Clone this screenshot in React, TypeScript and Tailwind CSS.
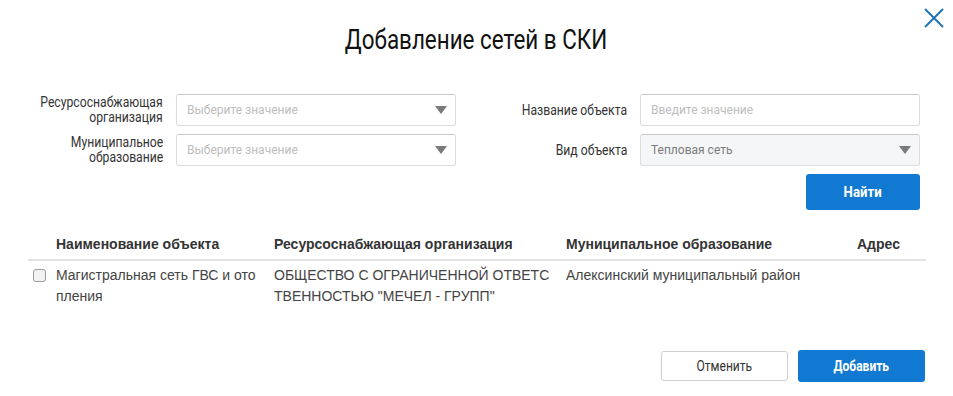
function Arrow() {
  return (
    <svg width="12" height="8" viewBox="0 0 12 8" className="shrink-0">
      <path d="M0 0 L12 0 L6 8 Z" fill="#7a7a7a" />
    </svg>
  );
}

function Select({ text, muted = false, disabled = false }: { text: string; muted?: boolean; disabled?: boolean }) {
  return (
    <div
      className={`flex items-center justify-between w-[280px] h-[32px] pl-[10px] pr-[8px] rounded-[3px] border border-[#dcdcdc] border-t-[#c8c8c8] ${
        disabled ? "bg-[#f5f6f8]" : "bg-white"
      }`}
    >
      <span className={`text-[12px] font-['Roboto'] ${muted ? "text-[#bdbdbd]" : "text-[#7b7b7b]"}`}>{text}</span>
      <Arrow />
    </div>
  );
}

function Field({ label, children, lw }: { label: React.ReactNode; children: React.ReactNode; lw: string }) {
  return (
    <div className="flex items-center">
      <div className={`${lw} flex justify-end pr-[13px]`}>
        <span className="block text-right origin-right scale-x-[0.87] font-['Roboto'] text-[14px] leading-[15px] text-[#333]">
          {label}
        </span>
      </div>
      {children}
    </div>
  );
}

function App() {
  return (
    <div className="w-[953px] h-[396px] bg-white relative font-['Liberation_Sans',Arial,sans-serif]">
      <button className="absolute right-[8px] top-[7px] w-[22px] h-[22px]">
        <svg width="22" height="22" viewBox="0 0 22 22">
          <path d="M2 2 L20 20 M20 2 L2 20" stroke="#1f74b8" strokeWidth="2" />
        </svg>
      </button>

      <div className="pt-[24px] text-center">
        <span className="inline-block scale-x-[0.83] font-['Roboto'] text-[27px] leading-[32px] text-[#111]">
          Добавление сетей в СКИ
        </span>
      </div>

      <div className="flex pt-[38px]">
        <div className="flex flex-col gap-[8px]">
          <Field lw="w-[176px]" label={<>Ресурсоснабжающая<br />организация</>}>
            <Select text="Выберите значение" muted />
          </Field>
          <Field lw="w-[176px]" label={<>Муниципальное<br />образование</>}>
            <Select text="Выберите значение" muted />
          </Field>
        </div>
        <div className="flex flex-col gap-[8px] ml-[4px]">
          <Field lw="w-[180px]" label="Название объекта">
            <div className="flex items-center w-[280px] h-[32px] pl-[10px] rounded-[3px] border border-[#dcdcdc] border-t-[#c8c8c8] bg-white">
              <span className="text-[12px] font-['Roboto'] text-[#bdbdbd]">Введите значение</span>
            </div>
          </Field>
          <Field lw="w-[180px]" label="Вид объекта">
            <Select text="Тепловая сеть" disabled />
          </Field>
          <div className="flex justify-end">
            <button className="w-[114px] h-[36px] rounded-[3px] bg-[#1279d3] text-white">
              <span className="inline-block scale-x-[0.88] font-['Roboto'] text-[15px] font-bold">Найти</span>
            </button>
          </div>
        </div>
      </div>

      <div className="mx-[28px] mt-[19px] w-[898px]">
        <div className="flex items-center h-[32px] border-b-2 border-[#e2e2e2] text-[14px] font-bold text-[#333]">
          <div className="w-[28px]" />
          <div className="w-[218px]">Наименование объекта</div>
          <div className="w-[292px]">Ресурсоснабжающая организация</div>
          <div className="w-[291px]">Муниципальное образование</div>
          <div>Адрес</div>
        </div>
        <div className="flex pt-[4px] text-[14px] leading-[21px] text-[#444]">
          <div className="w-[28px] pl-[5px] pt-[4px]">
            <div className="w-[13px] h-[13px] rounded-[3px] border border-[#9a9a9a] bg-[#f3f3f3]" />
          </div>
          <div className="w-[218px] pr-[16px] break-all">Магистральная сеть ГВС и отопления</div>
          <div className="w-[292px] pr-[12px] break-all">ОБЩЕСТВО С ОГРАНИЧЕННОЙ ОТВЕТСТВЕННОСТЬЮ "МЕЧЕЛ - ГРУПП"</div>
          <div className="w-[291px]">Алексинский муниципальный район</div>
          <div />
        </div>
      </div>

      <div className="absolute bottom-[14px] right-[28px] flex items-center gap-[10px] font-['Roboto']">
        <button className="w-[127px] h-[30px] rounded-[3px] border border-[#cfcfcf] bg-white text-[#333]">
          <span className="inline-block scale-x-[0.86] text-[14px]">Отменить</span>
        </button>
        <button className="w-[127px] h-[32px] rounded-[3px] bg-[#1279d3] text-white">
          <span className="inline-block scale-x-[0.86] text-[14px] font-bold">Добавить</span>
        </button>
      </div>
    </div>
  );
}

export default App;
